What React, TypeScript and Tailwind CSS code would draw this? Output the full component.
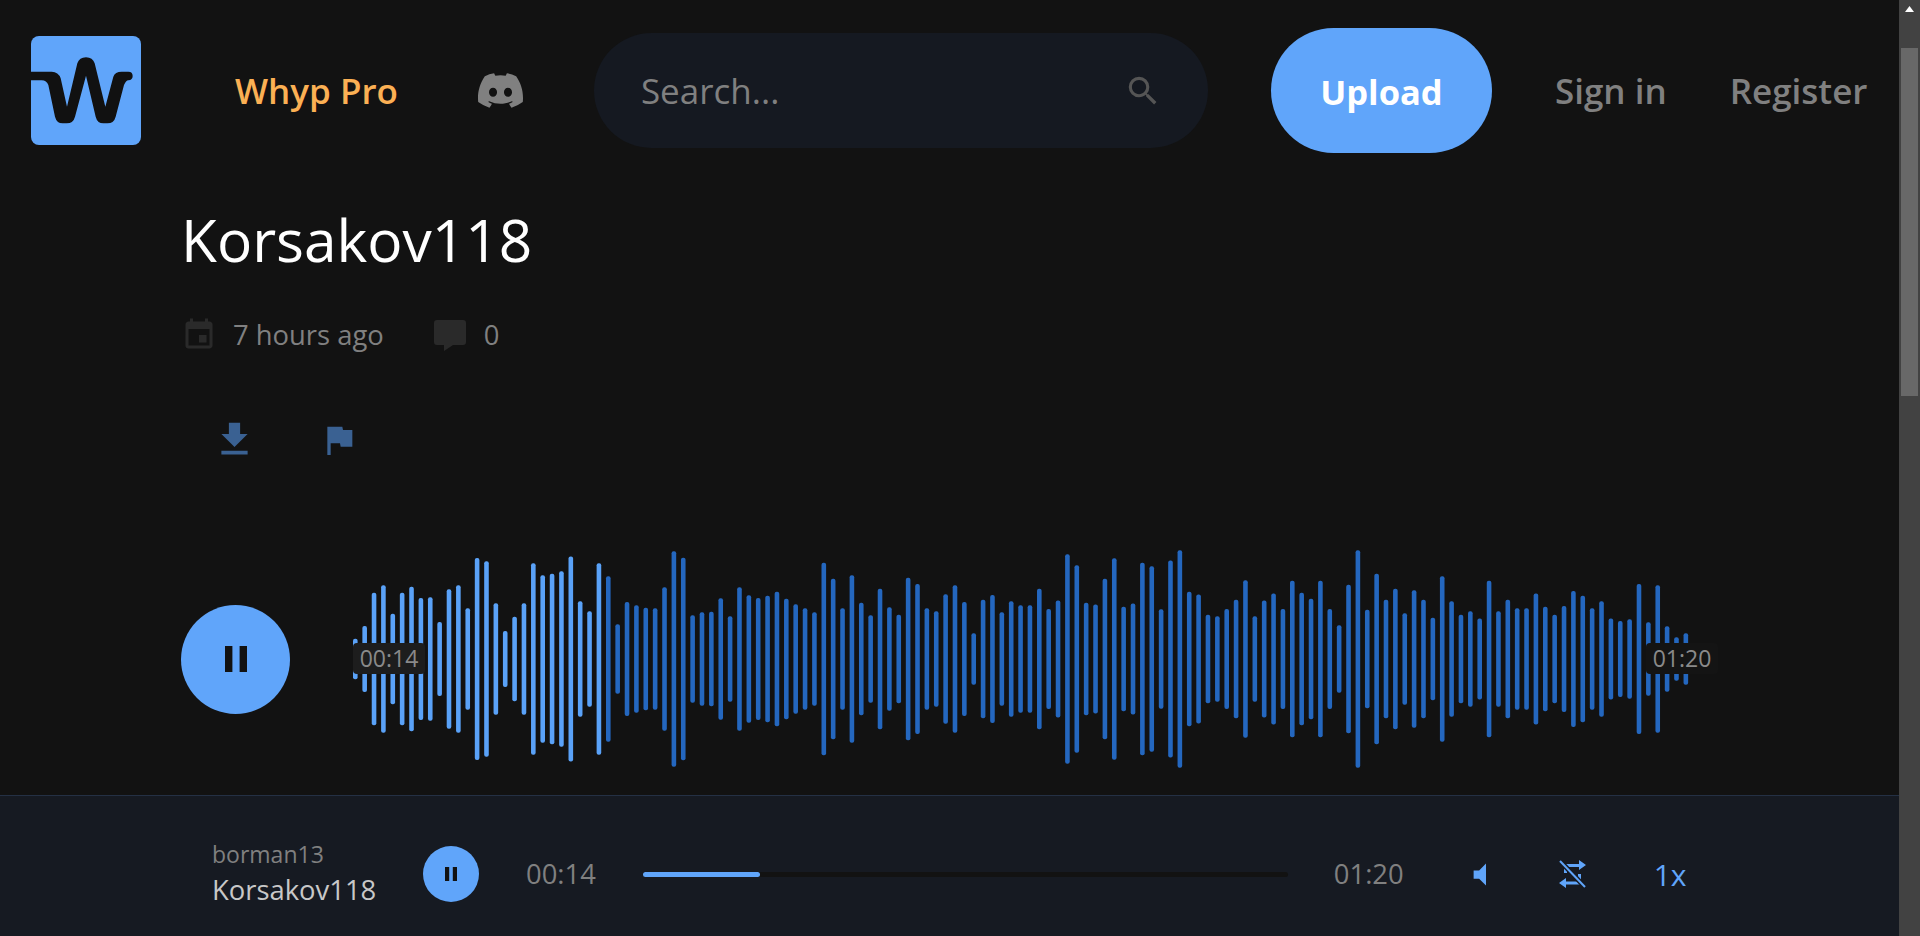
import { FaDiscord } from "react-icons/fa6";
import { MdEvent, MdFileDownload, MdFlag, MdSearch, MdVolumeMute } from "react-icons/md";

// peak heights read off the reference, in thirds of a pixel
const peaks = [
  122, 198, 398, 443, 272, 398, 434, 366, 371, 222, 418, 443, 305, 606, 586, 334, 168, 254, 334, 574,
  502, 512, 526, 615, 347, 286, 574, 497, 208, 342, 322, 308, 304, 431, 647, 608, 262, 281, 284, 365,
  256, 431, 383, 366, 379, 403, 361, 328, 304, 281, 578, 482, 305, 502, 338, 262, 422, 310, 266, 487,
  450, 305, 286, 389, 442, 342, 154, 356, 384, 281, 346, 322, 322, 422, 300, 351, 628, 563, 338, 327,
  482, 604, 314, 333, 578, 556, 299, 591, 652, 403, 387, 266, 257, 300, 356, 473, 257, 351, 393, 300,
  470, 398, 361, 470, 300, 202, 446, 652, 295, 512, 356, 422, 275, 412, 356, 248, 497, 346, 266, 286,
  243, 470, 286, 356, 304, 304, 393, 314, 266, 318, 408, 379, 304, 346, 243, 228, 238, 450, 220, 442,
  197, 131, 154,
];

function Logo() {
  return (
    <svg viewBox="33 33 330 327" className="h-[109px] w-[110px] shrink-0 rounded-lg bg-[#60a5fa]">
      <path
        d="M33 140L95 140Q115 140 122 160L141 245L172 115Q178 97 198 97Q218 97 224 115L256 245L280 155Q285 140 305 140L325 140Q338 140 338 153Q338 165 325 166Q318 166 312 180L287 275Q282 295 262 295L250 295Q232 295 227 275L198 152L165 275Q160 295 140 295L128 295Q110 295 105 275L85 180Q80 166 65 166L33 166Z"
        fill="#111111"
      />
    </svg>
  );
}

function PauseGlyph({ small }: { small?: boolean }) {
  return small ? (
    <svg viewBox="0 0 12 14" className="h-[14px] w-[12px]" fill="#121212">
      <rect x="0" width="4.2" height="14" />
      <rect x="7.8" width="4.2" height="14" />
    </svg>
  ) : (
    <svg viewBox="0 0 22 26" className="h-[26px] w-[22px]" fill="#121212">
      <rect x="0" width="7.4" height="26" />
      <rect x="14.6" width="7.4" height="26" />
    </svg>
  );
}

function Header() {
  return (
    <header className="flex h-[181px] items-center pl-[31px]">
      <Logo />
      <a className="ml-[94px] pt-[2px] text-[35px] font-semibold text-[#fbb054]">Whyp Pro</a>
      <FaDiscord size={49} className="ml-[78px] text-[#808080]" />
      <div className="ml-[69px] flex h-[115px] w-[614px] items-center justify-between rounded-full bg-[#151921] pl-[47px] pr-[46px]">
        <span className="pt-[2px] text-[35px] text-[#808080]">Search...</span>
        <MdSearch size={38} className="text-[#555555]" />
      </div>
      <button className="ml-[63px] flex h-[125px] w-[221px] items-center justify-center rounded-full bg-[#60a5fa] pt-[2px] text-[34.500px] font-bold text-white">
        Upload
      </button>
      <a className="ml-[63px] pt-[2px] text-[35px] font-semibold text-[#808080]">Sign in</a>
      <a className="ml-[63px] pt-[2px] text-[35px] font-semibold text-[#808080]">Register</a>
    </header>
  );
}

function Waveform() {
  return (
    <div className="relative ml-[63px] h-[230px] w-[1365px]">
      <svg viewBox="0 0 1340 230" className="h-[230px] w-[1340px]">
        {peaks.map((peak, i) => (
          <rect
            key={i}
            x={i * 9.37}
            y={115 - peak / 6}
            width={4.6}
            height={peak / 3}
            rx={2}
            fill={i < 27 ? "#5aa2f8" : "#2467bf"}
          />
        ))}
      </svg>
      <span className="absolute left-0 top-[99px] flex h-[31px] w-[72px] items-center justify-center rounded bg-[#1d1d1d] text-[23px] text-[#8a8a8a]">
        00:14
      </span>
      <span className="absolute left-[1293px] top-[99px] flex h-[31px] w-[72px] items-center justify-center rounded bg-[#141414] text-[23px] text-[#8a8a8a]">
        01:20
      </span>
    </div>
  );
}

function Player() {
  return (
    <footer className="flex h-[141px] shrink-0 items-center border-t border-[#243044] bg-[#161a22] pl-[212px] pt-4">
      <div className="w-[211px]">
        <div className="text-[23px] leading-[32px] text-[#808080]">borman13</div>
        <div className="text-[27.400px] leading-[40px] text-[#c8c8c8]">Korsakov118</div>
      </div>
      <button className="flex h-[56px] w-[56px] items-center justify-center rounded-full bg-[#60a5fa]">
        <PauseGlyph small />
      </button>
      <span className="ml-[47px] text-[27.400px] text-[#808080]">00:14</span>
      <div className="ml-[47px] h-[5px] w-[645px] rounded-full bg-[#121212]">
        <div className="h-[5px] w-[117px] rounded-full bg-[#60a5fa]" />
      </div>
      <span className="ml-[46px] text-[27.400px] text-[#808080]">01:20</span>
      <MdVolumeMute size={33} className="ml-[60px] text-[#60a5fa]" />
      <svg viewBox="0 0 27 28" className="ml-[62px] h-[28px] w-[27px]" fill="#60a5fa">
        <path d="M5 4H20V0L27 5L20 10V7H8V13H5Z" />
        <path d="M22 24.500H7V28L0 23L7 18V21.500H19V14H22Z" />
        <path d="M1 1L26 27" stroke="#161a22" strokeWidth="5" />
        <path d="M1 1L26 27" stroke="#60a5fa" strokeWidth="2" />
      </svg>
      <span className="ml-[68px] text-[30px] text-[#60a5fa]">1x</span>
    </footer>
  );
}

function Scrollbar() {
  return (
    <div className="flex w-[21px] shrink-0 flex-col items-center bg-[#424242]">
      <svg viewBox="0 0 9 6" className="mt-[6px] h-[6px] w-[9px]" fill="#ffffff">
        <path d="M4.500 0L9 6H0Z" />
      </svg>
      <div className="mt-[36px] h-[348px] w-[17px] bg-[#686868]" />
    </div>
  );
}

export default function App() {
  return (
    <div className="flex h-screen overflow-hidden bg-[#121212] font-['Open_Sans',sans-serif]">
      <div className="flex min-w-0 flex-1 flex-col">
        <div className="min-h-0 flex-1">
          <Header />
          <main className="pl-[181px]">
            <h1 className="mt-[18px] text-[58.600px] leading-[80px] text-white">Korsakov118</h1>
            <div className="mt-[37px] flex h-[38px] items-center text-[27.400px] text-[#808080]">
              <MdEvent size={36} className="text-[#2a2a2a]" />
              <span className="ml-[16px]">7 hours ago</span>
              <svg viewBox="0 0 32 31" className="ml-[50px] h-[31px] w-[32px]" fill="#2a2a2a">
                <path d="M3 0H29A3 3 0 0 1 32 3V22A3 3 0 0 1 29 25H19L10 31V25H3A3 3 0 0 1 0 22V3A3 3 0 0 1 3 0Z" />
              </svg>
              <span className="ml-[18px]">0</span>
            </div>
            <div className="mt-[63px] flex items-center text-[#3a6192]">
              <MdFileDownload size={45} className="ml-[31px]" />
              <MdFlag size={40} className="ml-[62px]" />
            </div>
            <div className="mt-[82px] flex items-center">
              <button className="flex h-[109px] w-[109px] items-center justify-center rounded-full bg-[#60a5fa]">
                <PauseGlyph />
              </button>
              <Waveform />
            </div>
          </main>
        </div>
        <Player />
      </div>
      <Scrollbar />
    </div>
  );
}
